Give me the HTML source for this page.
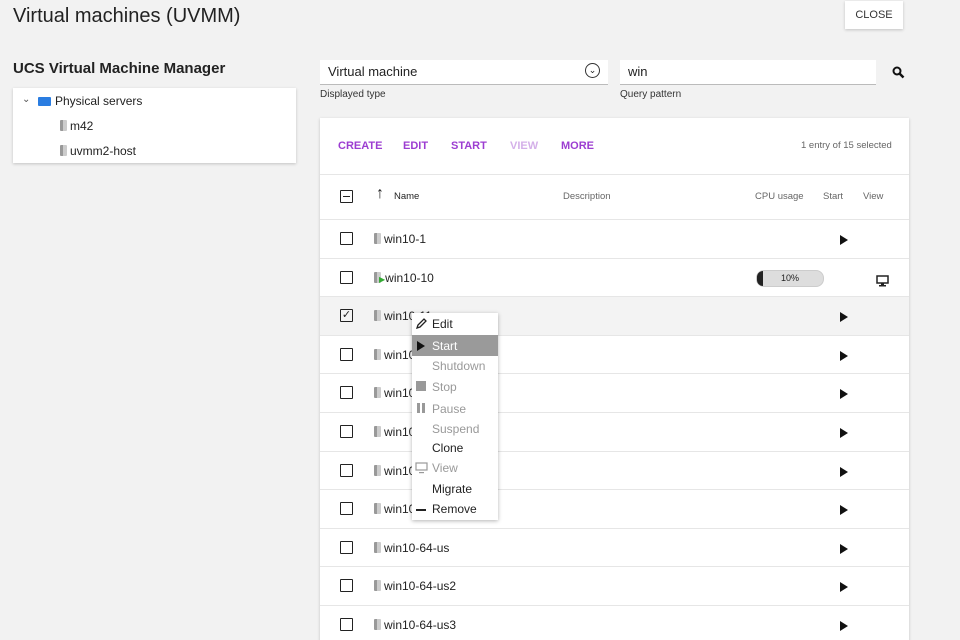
<!DOCTYPE html><html><head><style>
html,body{margin:0;width:960px;height:640px;overflow:hidden}
body{background:#f2f2f2;font-family:"Liberation Sans",sans-serif;position:relative;color:#222}
.a{position:absolute}
.card{background:#fff;box-shadow:0 1px 3px rgba(0,0,0,.2)}
.srv{display:inline-block;width:7px;height:11px;background:linear-gradient(90deg,#999 0 40%,#ccc 40%);border-radius:1px;vertical-align:-1px;margin-right:3px}
.cb{position:absolute;left:20px;width:11px;height:11px;border:1.5px solid #222;border-radius:1px}
.row{position:absolute;left:0;width:589px;height:38px;border-top:1px solid #e6e6e6}
.row .n{position:absolute;left:54px;top:12px;font-size:12px}
.play{position:absolute;left:520px;top:15px;width:0;height:0;border-left:8px solid #111;border-top:5px solid transparent;border-bottom:5px solid transparent}
.tb{position:absolute;top:22px;font-size:11px;font-weight:bold;color:#9c3dd1}
.mi{position:absolute;left:20px;font-size:12px}
</style></head><body>
<div class="a" style="left:13px;top:5px;font-size:20px;color:#222">Virtual machines (UVMM)</div>
<div class="a card" style="left:845px;top:1px;width:58px;height:28px;line-height:28px;text-align:center;font-size:11px;color:#333">CLOSE</div>
<div class="a" style="left:13px;top:60px;font-size:15px;font-weight:bold">UCS Virtual Machine Manager</div>
<div class="a card" style="left:13px;top:88px;width:283px;height:75px;font-size:12px">
<div class="a" style="left:9px;top:6px;font-size:10px;color:#555">⌄</div>
<div class="a" style="left:25px;top:9px;width:13px;height:9px;background:#2a7de1;border-radius:1px"></div>
<div class="a" style="left:42px;top:6px">Physical servers</div>
<div class="a" style="left:47px;top:31px"><span class="srv"></span>m42</div>
<div class="a" style="left:47px;top:56px"><span class="srv"></span>uvmm2-host</div>
</div>
<div class="a" style="left:320px;top:60px;width:288px;height:24px;background:#fff;border-bottom:1px solid #bbb"></div>
<div class="a" style="left:328px;top:64px;font-size:13px">Virtual machine</div>
<div class="a" style="left:585px;top:63px;width:13px;height:13px;border:1.3px solid #333;border-radius:50%;font-size:9px;text-align:center;line-height:12px">⌄</div>
<div class="a" style="left:320px;top:89px;font-size:10px;color:#333">Displayed type</div>
<div class="a" style="left:620px;top:60px;width:256px;height:24px;background:#fff;border-bottom:1px solid #bbb"></div>
<div class="a" style="left:628px;top:64px;font-size:13px">win</div>
<div class="a" style="left:620px;top:89px;font-size:10px;color:#333">Query pattern</div>
<svg class="a" style="left:892px;top:66px" width="13" height="13"><circle cx="5" cy="5" r="3.5" stroke="#111" stroke-width="2" fill="none"/><line x1="7.5" y1="7.5" x2="11.5" y2="11.5" stroke="#111" stroke-width="2.5"/></svg>
<div class="a card" style="left:320px;top:118px;width:589px;height:530px">
<div class="tb" style="left:18px">CREATE</div><div class="tb" style="left:83px">EDIT</div><div class="tb" style="left:131px">START</div><div class="tb" style="left:190px;color:#d4b0e9">VIEW</div><div class="tb" style="left:241px">MORE</div>
<div class="a" style="left:481px;top:22px;font-size:9.5px;color:#666">1 entry of 15 selected</div>
<div class="a" style="left:0;top:56px;width:589px;height:45px;border-top:1px solid #e6e6e6;font-size:9.5px;color:#666">
<div class="cb" style="top:15px"><div style="margin:4.5px 2px;height:1.5px;background:#222"></div></div>
<div class="a" style="left:56px;top:10px;font-size:16px;color:#222;font-weight:bold">↑</div>
<div class="a" style="left:74px;top:16px;color:#222">Name</div>
<div class="a" style="left:243px;top:16px">Description</div>
<div class="a" style="left:435px;top:16px">CPU usage</div>
<div class="a" style="left:503px;top:16px">Start</div>
<div class="a" style="left:543px;top:16px">View</div>
</div>
<div class="row" style="top:101px"><div class="cb" style="top:12px"></div><div class="n"><span class="srv"></span>win10-1</div><div class="play"></div></div>
<div class="row" style="top:139.6px"><div class="cb" style="top:12px"></div><div class="n"><span class="srv"></span><span style="color:#3a3;font-size:8px;margin-left:-5px">▶</span>win10-10</div>
<div class="a" style="left:436px;top:11px;width:66px;height:15px;border-radius:8px;background:#ddd;border:1px solid #ccc;font-size:9px;text-align:center;line-height:15px"><div class="a" style="left:0;top:0;width:6px;height:15px;background:#222;border-radius:8px 0 0 8px"></div>10%</div>
<svg class="a" style="left:556px;top:16px" width="13" height="12"><rect x="1" y="1" width="11" height="7" fill="none" stroke="#222" stroke-width="1.5"/><rect x="5" y="8" width="3" height="2" fill="#222"/><rect x="3" y="10" width="7" height="1.5" fill="#222"/></svg></div>
<div class="row" style="top:178.2px;background:#f3f3f3"><div class="cb" style="top:12px;font-size:11px;line-height:10px;text-align:center">✓</div><div class="n"><span class="srv"></span>win10-11</div><div class="play"></div></div>
<div class="row" style="top:216.8px"><div class="cb" style="top:12px"></div><div class="n"><span class="srv"></span>win10-12</div><div class="play"></div></div>
<div class="row" style="top:255.4px"><div class="cb" style="top:12px"></div><div class="n"><span class="srv"></span>win10-2</div><div class="play"></div></div>
<div class="row" style="top:294px"><div class="cb" style="top:12px"></div><div class="n"><span class="srv"></span>win10-3</div><div class="play"></div></div>
<div class="row" style="top:332.6px"><div class="cb" style="top:12px"></div><div class="n"><span class="srv"></span>win10-4</div><div class="play"></div></div>
<div class="row" style="top:371.2px"><div class="cb" style="top:12px"></div><div class="n"><span class="srv"></span>win10-5</div><div class="play"></div></div>
<div class="row" style="top:409.8px"><div class="cb" style="top:12px"></div><div class="n"><span class="srv"></span>win10-64-us</div><div class="play"></div></div>
<div class="row" style="top:448.4px"><div class="cb" style="top:12px"></div><div class="n"><span class="srv"></span>win10-64-us2</div><div class="play"></div></div>
<div class="row" style="top:487px"><div class="cb" style="top:12px"></div><div class="n"><span class="srv"></span>win10-64-us3</div><div class="play"></div></div>
</div>
<div class="a card" style="left:412px;top:313px;width:86px;height:207px;box-shadow:0 1px 4px rgba(0,0,0,.3)">
<svg class="a" style="left:3px;top:4px" width="13" height="13"><path d="M2 11 L3 8 L9 2 L11 4 L5 10 Z" fill="none" stroke="#222" stroke-width="1.3"/></svg><div class="mi" style="top:4px">Edit</div>
<div class="a" style="left:0;top:22px;width:86px;height:21px;background:#9a9a9a"></div>
<div class="a" style="left:5px;top:28px;width:0;height:0;border-left:8px solid #111;border-top:5px solid transparent;border-bottom:5px solid transparent"></div>
<div class="mi" style="top:26px;color:#fff">Start</div>
<div class="mi" style="top:46px;color:#999">Shutdown</div>
<div class="a" style="left:4px;top:68px;width:10px;height:10px;background:#999"></div><div class="mi" style="top:67px;color:#999">Stop</div>
<div class="a" style="left:5px;top:90px;width:3px;height:10px;background:#999"></div><div class="a" style="left:10px;top:90px;width:3px;height:10px;background:#999"></div><div class="mi" style="top:89px;color:#999">Pause</div>
<div class="mi" style="top:109px;color:#999">Suspend</div>
<div class="mi" style="top:128px">Clone</div>
<svg class="a" style="left:3px;top:149px" width="13" height="12"><rect x="1" y="1" width="11" height="7" fill="none" stroke="#999" stroke-width="1.2"/><rect x="4" y="10" width="5" height="1.2" fill="#999"/></svg><div class="mi" style="top:148px;color:#999">View</div>
<div class="mi" style="top:169px">Migrate</div>
<div class="a" style="left:4px;top:196px;width:10px;height:1.5px;background:#222"></div><div class="mi" style="top:189px">Remove</div>
</div>
</body></html>
